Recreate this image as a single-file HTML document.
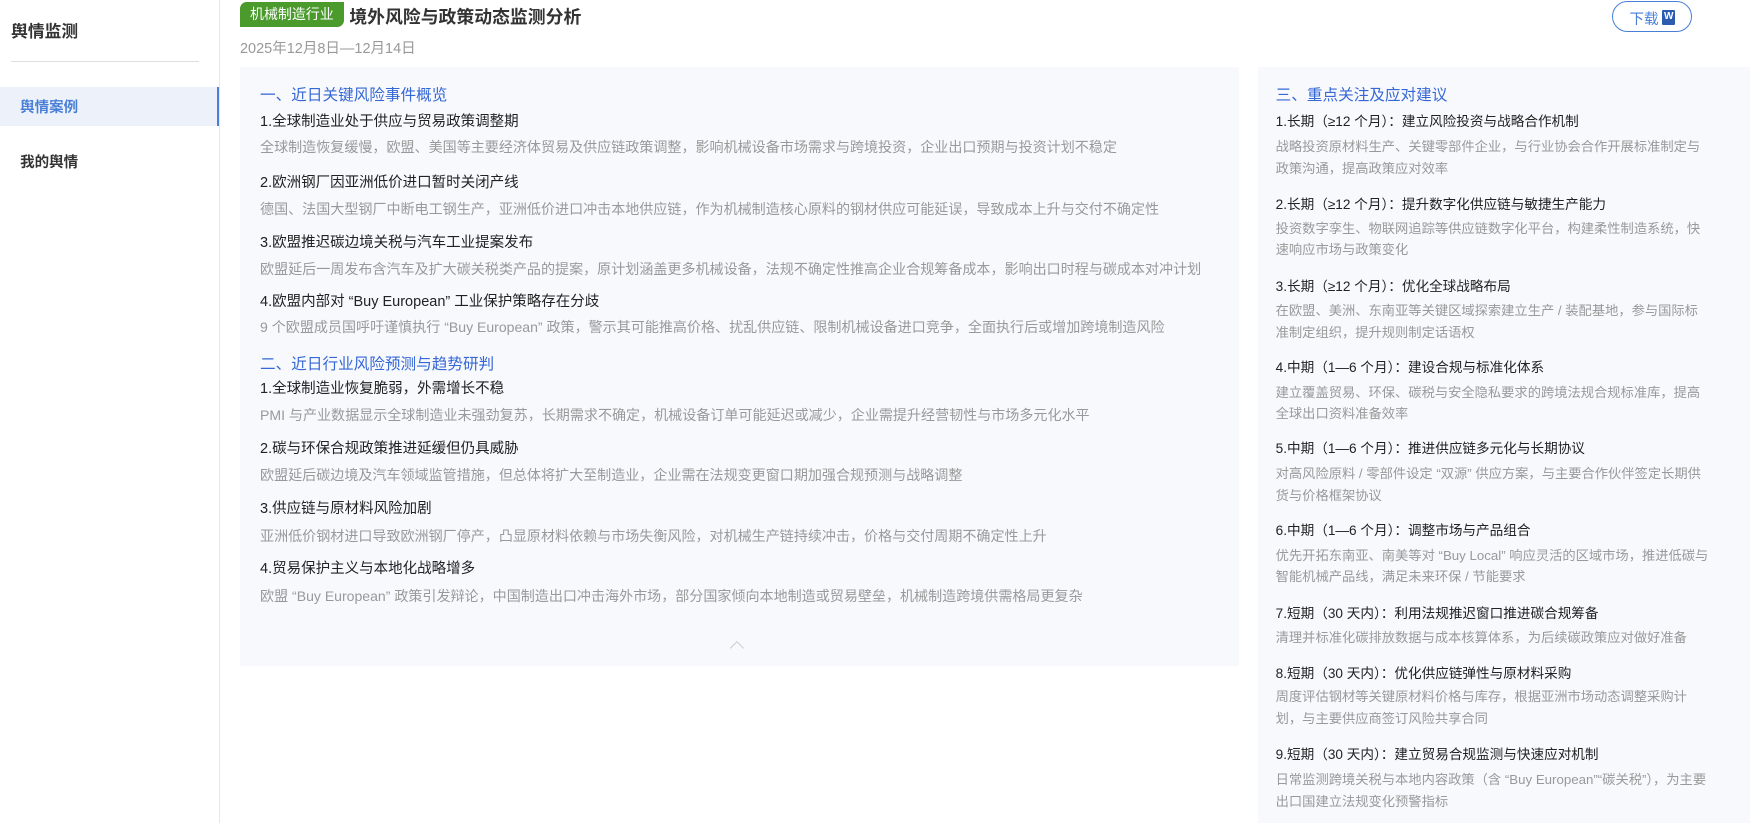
<!DOCTYPE html>
<html><head><meta charset="utf-8"><style>
html,body{margin:0;padding:0;background:#fff;overflow:hidden}
body{width:1568px;height:737px;zoom:1.11607;position:relative;font-family:"Liberation Sans","Noto Sans CJK SC",sans-serif;color:#222}
.a{position:absolute;white-space:nowrap}
.side{position:absolute;left:0;top:0;width:196px;height:737px;border-right:1px solid #e8e8e8}
.h{color:#3567d6;font-size:14px}
.t{font-size:13px;color:#222}
.rt{font-size:12.2px;color:#222}
.d{font-size:12.6px;color:#999}
.rd{font-size:11.9px;color:#999;white-space:normal;width:388px;line-height:19.5px}
</style></head><body>
<div class="side">
<div class="a" style="left:10px;top:16px;font-size:15px;font-weight:bold;color:#333">舆情监测</div>
<div class="a" style="left:10px;top:55px;width:168px;height:1px;background:#ddd"></div>
<div class="a" style="left:0;top:78px;width:194px;height:35px;background:#edf2fa;border-right:2px solid #4a7fd8"></div>
<div class="a" style="left:18px;top:86px;font-size:13px;font-weight:bold;color:#4a7fd8">舆情案例</div>
<div class="a" style="left:18px;top:135px;font-size:13px;font-weight:bold;color:#333">我的舆情</div>
</div>
<div class="a" style="left:215px;top:2px;width:93px;height:22px;background:#4a9a2c;border-radius:6px 0 6px 0;color:#fff;font-size:12.5px;line-height:22px;text-align:center">机械制造行业</div>
<div class="a" style="left:313px;top:3px;font-size:16px;font-weight:bold;color:#333">境外风险与政策动态监测分析</div>
<div class="a" style="left:215px;top:33px;font-size:13px;color:#999">2025年12月8日—12月14日</div>
<div class="a" style="left:1444px;top:1px;width:72px;height:28px;border:1px solid #4a7fd8;border-radius:15px;box-sizing:border-box"></div>
<div class="a" style="left:1460px;top:7px;font-size:13px;color:#4a7fd8">下载</div>
<div class="a" style="left:1489px;top:9px;width:12px;height:13px;background:#2b5cb0;border-radius:1px"><span style="position:absolute;left:2px;top:1px;color:#fff;font-size:9px;font-weight:bold">W</span></div>

<div class="a" style="left:215px;top:60px;width:895px;height:537px;background:#f8f9fd"></div>
<div class="a" style="left:1127px;top:60px;width:441px;height:677px;background:#f8f9fd"></div>

<div class="a h" style="left:233px;top:74px">一、近日关键风险事件概览</div>
<div class="a t" style="left:233px;top:99px">1.全球制造业处于供应与贸易政策调整期</div>
<div class="a d" style="left:233px;top:123px">全球制造恢复缓慢，欧盟、美国等主要经济体贸易及供应链政策调整，影响机械设备市场需求与跨境投资，企业出口预期与投资计划不稳定</div>
<div class="a t" style="left:233px;top:153px">2.欧洲钢厂因亚洲低价进口暂时关闭产线</div>
<div class="a d" style="left:233px;top:178px">德国、法国大型钢厂中断电工钢生产，亚洲低价进口冲击本地供应链，作为机械制造核心原料的钢材供应可能延误，导致成本上升与交付不确定性</div>
<div class="a t" style="left:233px;top:207px">3.欧盟推迟碳边境关税与汽车工业提案发布</div>
<div class="a d" style="left:233px;top:232px">欧盟延后一周发布含汽车及扩大碳关税类产品的提案，原计划涵盖更多机械设备，法规不确定性推高企业合规筹备成本，影响出口时程与碳成本对冲计划</div>
<div class="a t" style="left:233px;top:260px">4.欧盟内部对 “Buy European” 工业保护策略存在分歧</div>
<div class="a d" style="left:233px;top:284px">9 个欧盟成员国呼吁谨慎执行 “Buy European” 政策，警示其可能推高价格、扰乱供应链、限制机械设备进口竞争，全面执行后或增加跨境制造风险</div>
<div class="a h" style="left:233px;top:315px">二、近日行业风险预测与趋势研判</div>
<div class="a t" style="left:233px;top:338px">1.全球制造业恢复脆弱，外需增长不稳</div>
<div class="a d" style="left:233px;top:363px">PMI 与产业数据显示全球制造业未强劲复苏，长期需求不确定，机械设备订单可能延迟或减少，企业需提升经营韧性与市场多元化水平</div>
<div class="a t" style="left:233px;top:392px">2.碳与环保合规政策推进延缓但仍具威胁</div>
<div class="a d" style="left:233px;top:417px">欧盟延后碳边境及汽车领域监管措施，但总体将扩大至制造业，企业需在法规变更窗口期加强合规预测与战略调整</div>
<div class="a t" style="left:233px;top:445px">3.供应链与原材料风险加剧</div>
<div class="a d" style="left:233px;top:471px">亚洲低价钢材进口导致欧洲钢厂停产，凸显原材料依赖与市场失衡风险，对机械生产链持续冲击，价格与交付周期不确定性上升</div>
<div class="a t" style="left:233px;top:499px">4.贸易保护主义与本地化战略增多</div>
<div class="a d" style="left:233px;top:525px">欧盟 “Buy European” 政策引发辩论，中国制造出口冲击海外市场，部分国家倾向本地制造或贸易壁垒，机械制造跨境供需格局更复杂</div>
<div class="a" style="left:656px;top:576px;width:8px;height:8px;border-left:1px solid #ccc;border-top:1px solid #ccc;transform:rotate(45deg)"></div>

<div class="a h" style="left:1143px;top:74px">三、重点关注及应对建议</div>
<div class="a rt" style="left:1143px;top:99px">1.长期（≥12 个月）：建立风险投资与战略合作机制</div>
<div class="a rd" style="left:1143px;top:122px">战略投资原材料生产、关键零部件企业，与行业协会合作开展标准制定与政策沟通，提高政策应对效率</div>
<div class="a rt" style="left:1143px;top:173px">2.长期（≥12 个月）：提升数字化供应链与敏捷生产能力</div>
<div class="a rd" style="left:1143px;top:195px">投资数字孪生、物联网追踪等供应链数字化平台，构建柔性制造系统，快速响应市场与政策变化</div>
<div class="a rt" style="left:1143px;top:246px">3.长期（≥12 个月）：优化全球战略布局</div>
<div class="a rd" style="left:1143px;top:269px">在欧盟、美洲、东南亚等关键区域探索建立生产 / 装配基地，参与国际标准制定组织，提升规则制定话语权</div>
<div class="a rt" style="left:1143px;top:319px">4.中期（1—6 个月）：建设合规与标准化体系</div>
<div class="a rd" style="left:1143px;top:342px">建立覆盖贸易、环保、碳税与安全隐私要求的跨境法规合规标准库，提高全球出口资料准备效率</div>
<div class="a rt" style="left:1143px;top:392px">5.中期（1—6 个月）：推进供应链多元化与长期协议</div>
<div class="a rd" style="left:1143px;top:415px">对高风险原料 / 零部件设定 “双源” 供应方案，与主要合作伙伴签定长期供货与价格框架协议</div>
<div class="a rt" style="left:1143px;top:465px">6.中期（1—6 个月）：调整市场与产品组合</div>
<div class="a rd" style="left:1143px;top:488px">优先开拓东南亚、南美等对 “Buy Local” 响应灵活的区域市场，推进低碳与智能机械产品线，满足未来环保 / 节能要求</div>
<div class="a rt" style="left:1143px;top:539px">7.短期（30 天内）：利用法规推迟窗口推进碳合规筹备</div>
<div class="a rd" style="left:1143px;top:562px">清理并标准化碳排放数据与成本核算体系，为后续碳政策应对做好准备</div>
<div class="a rt" style="left:1143px;top:593px">8.短期（30 天内）：优化供应链弹性与原材料采购</div>
<div class="a rd" style="left:1143px;top:615px">周度评估钢材等关键原材料价格与库存，根据亚洲市场动态调整采购计划，与主要供应商签订风险共享合同</div>
<div class="a rt" style="left:1143px;top:666px">9.短期（30 天内）：建立贸易合规监测与快速应对机制</div>
<div class="a rd" style="left:1143px;top:689px">日常监测跨境关税与本地内容政策（含 “Buy European”“碳关税”），为主要出口国建立法规变化预警指标</div>
</body></html>
